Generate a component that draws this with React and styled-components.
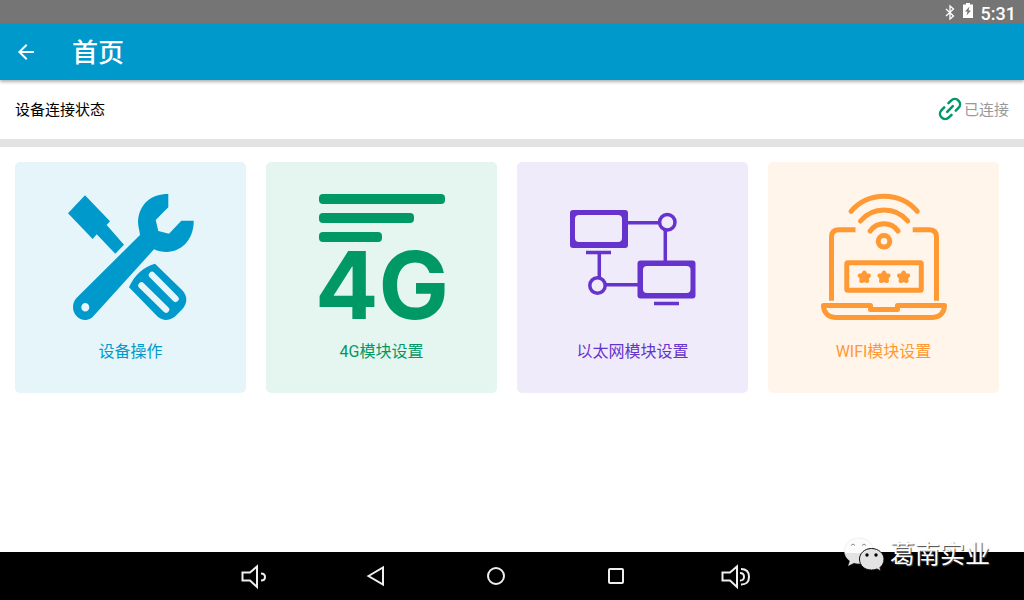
import React from "react";
import styled, { createGlobalStyle } from "styled-components";

const GlobalStyle = createGlobalStyle`
  * {
    box-sizing: border-box;
  }
  body {
    margin: 0;
    background: #fff;
    font-family: Roboto, "Noto Sans CJK SC", sans-serif;
  }
  button {
    font-family: inherit;
    border: none;
    padding: 0;
    cursor: pointer;
  }
`;

const ToolsIcon = () => (
  <CardIcon viewBox="0 0 126 126" fill="currentColor">
    <path d="M0 19.3 17 1.3 42 27.3 38.7 31 56 50.7 47.3 59.7 28.7 40.3 24.7 45Z" />
    <path
      fillRule="evenodd"
      d="M100.3 0V13.3L87.7 26 90.3 37 101 39.7 113.3 26.7H125.7C126 46 113 58 98.7 58 94 58 90 57 86 55.3L26 121.5C23 125 20 126 17.3 126 10.5 126 5 120 5 113.3 5 109.5 6 106.5 8.7 103.7L72 41C71.5 36 70 32 70 27.7 71 10 83 0 100.3 0ZM17.3 109A4 4.3 0 1 0 17.3 117.6 4 4.3 0 1 0 17.3 109Z"
    />
    <path d="M87 69.7 114 96C119.8 102 119.5 109 114.5 115L107 122.5C101 127 95 127 89.5 122.5L61 93.3C66 81 77 72 87 69.7Z" />
    <path
      d="M73.5 91.5 98 115.5M84 81 107.5 104.7"
      stroke="#e5f5fa"
      strokeWidth="6.5"
      strokeLinecap="round"
    />
  </CardIcon>
);

const SignalIcon = () => (
  <CardIcon viewBox="0 0 126 126" fill="currentColor">
    <rect width="126" height="10" rx="4" />
    <rect y="19" width="95" height="10" rx="4" />
    <rect y="38" width="63" height="10" rx="4" />
    <SignalText x="63" y="125" textAnchor="middle">
      4G
    </SignalText>
  </CardIcon>
);

const NetworkIcon = () => (
  <CardIcon viewBox="0 0 126 126" fill="currentColor">
    <path
      fillRule="evenodd"
      d="M3 16H55Q58 16 58 19V51Q58 54 55 54H3Q0 54 0 51V19Q0 16 3 16ZM9 21Q5 21 5 25V44Q5 48 9 48H48Q52 48 52 44V25Q52 21 48 21Z"
    />
    <path
      fillRule="evenodd"
      d="M70.5 66.5H122.5Q125.5 66.5 125.5 69.5V101.5Q125.5 104.5 122.5 104.5H70.5Q67.5 104.5 67.5 101.5V69.5Q67.5 66.5 70.5 66.5ZM77 72Q73 72 73 76V95Q73 99 77 99H116.5Q120.5 99 120.5 95V76Q120.5 72 116.5 72Z"
    />
    <path d="M16 56.7H41V60.3H16ZM84 107.7H109V111.3H84Z" />
    <g fill="none" stroke="currentColor" strokeWidth="3.5">
      <path d="M57 28.7H89.5M95.3 36V67M29.3 60V84M35 90.7H68" />
      <circle cx="97.3" cy="28.3" r="7.7" />
      <circle cx="27.5" cy="91.5" r="7.7" />
    </g>
  </CardIcon>
);

const Star = ({ x }) => (
  <path
    transform={`translate(${x} 83)`}
    fill="currentColor"
    strokeWidth="4"
    strokeLinejoin="round"
    d="M0-4.5 1.6-1.8 4.6-1.4 2.6 1.1 3 4 0 3-3 4-2.6 1.1-4.6-1.4-1.6-1.8Z"
  />
);

const WifiIcon = () => (
  <CardIcon viewBox="0 0 126 126" fill="none" stroke="currentColor" strokeWidth="5">
    <g strokeLinecap="round">
      <path d="M30 17.3A44 44 0 0 1 96.3 17.3" />
      <path d="M39.5 27A31 31 0 0 1 86.7 27" />
      <path d="M49.2 37A17 17 0 0 1 77 37" />
    </g>
    <circle cx="63" cy="47.3" r="5.8" />
    <path d="M10.5 106.7V43Q10.5 35.7 18 35.7H34.5M91.7 35.7H108Q115.5 35.7 115.5 43V106.7" />
    <rect x="25.8" y="68.8" width="74.5" height="27.5" rx="1" />
    <Star x={43.3} />
    <Star x={63} />
    <Star x={82.6} />
    <path
      strokeLinejoin="round"
      d="M2.5 111.5H49.5V115.5H76.5V111.5H123.5C123.5 118 119 123.5 112 123.5H14C7 123.5 2.5 118 2.5 111.5Z"
    />
  </CardIcon>
);

const BackIcon = () => (
  <svg width="24" height="24" viewBox="0 0 24 24" fill="currentColor">
    <path d="M20 11H7.83l5.59-5.59L12 4l-8 8 8 8 1.41-1.41L7.83 13H20v-2z" />
  </svg>
);

const BluetoothIcon = () => (
  <svg width="10" height="16" viewBox="0 0 10 16" fill="none" stroke="currentColor">
    <path d="M1 5 8.5 12 5 15V2L8.5 5 1 12" strokeWidth="1.3" />
  </svg>
);

const BatteryIcon = () => (
  <svg width="10" height="18" viewBox="0 0 10 18" fill="currentColor">
    <path
      fillRule="evenodd"
      d="M3 0H7V1.5H10V15H0V1.5H3ZM6.5 3.5 2 8.5H4.5L3.5 12.5 8 7.5H5.5Z"
    />
  </svg>
);

const LinkIcon = () => (
  <svg
    width="24"
    height="24"
    viewBox="0 0 24 24"
    fill="none"
    stroke="#009966"
    strokeWidth="2.5"
    strokeLinecap="round"
  >
    <g transform="rotate(-45 12 12)">
      <path d="M9 17.2H5.2A5.2 5.2 0 0 1 5.2 6.8H9M15 6.8H18.8A5.2 5.2 0 0 1 18.8 17.2H15M8 12H16" />
    </g>
  </svg>
);

const WechatIcon = () => (
  <svg width="42" height="36" viewBox="0 0 42 36">
    <defs>
      <linearGradient id="bubble" gradientUnits="userSpaceOnUse" x1="0" y1="0" x2="0" y2="32">
        <stop offset="0.5" stopColor="#fcfcfc" />
        <stop offset="0.5" stopColor="#e3e3e3" />
      </linearGradient>
    </defs>
    <path
      fill="url(#bubble)"
      stroke="#e0e0e0"
      strokeWidth="0.5"
      d="M15 1C6 1 0.5 7 0.5 14 0.5 18 2.5 21.5 6 24L4.5 28.5 10 25.8C12 26.5 14 26.8 17 26.5 25 25.5 29.5 20.5 29.5 14 29.5 7 24 1 15 1Z"
    />
    <path
      fill="#e3e3e3"
      stroke="#111"
      strokeWidth="1"
      d="M27.5 11.5C20.5 11.5 15.5 16.5 15.5 22 15.5 28.5 20.5 33 27.5 33 29.5 33 31.5 32.5 33 32L37 34 36 30.5C38.5 28.5 40 25.5 40 22 40 16.5 34.5 11.5 27.5 11.5Z"
    />
    <path d="M7 8.5Q9 5.5 11 8.5M18 8.5Q20 5.5 22 8.5" fill="none" stroke="#888" />
    <circle cx="23" cy="18" r="1.7" />
    <circle cx="32" cy="18" r="1.7" />
  </svg>
);

const navItems = [
  {
    label: "音量减",
    shape: <path d="M2.5 12.5H10L17 6.5V27L10 20.5H2.5ZM21 13.5Q25 13.5 25 17T21 20.5" />,
  },
  { label: "返回", shape: <path d="M8.5 16 23 7.5V24.5Z" /> },
  { label: "主屏幕", shape: <circle cx="16" cy="16" r="8" /> },
  { label: "最近任务", shape: <rect x="9" y="9" width="14" height="14" rx="1" /> },
  {
    label: "音量加",
    shape: (
      <path d="M2.5 12.5H10L17 6.5V27L10 20.5H2.5ZM20 13Q24 13 24 16.8T20 20.5M21 9Q29 9 29 16.8T21 24.5" />
    ),
  },
];

const modules = [
  { title: "设备操作", color: "#0099cc", bg: "#e5f5fa", Icon: ToolsIcon },
  { title: "4G模块设置", color: "#009966", bg: "#e5f5ef", Icon: SignalIcon },
  { title: "以太网模块设置", color: "#6633cc", bg: "#efebfa", Icon: NetworkIcon },
  { title: "WIFI模块设置", color: "#ff9933", bg: "#fff5ea", Icon: WifiIcon },
];

const App = () => {
  return (
    <Page>
      <GlobalStyle />
      <StatusBar>
        <BluetoothIcon />
        <BatteryIcon />
        <Clock>5:31</Clock>
      </StatusBar>
      <Header>
        <BackButton aria-label="返回">
          <BackIcon />
        </BackButton>
        <Title>首页</Title>
      </Header>
      <Connection>
        <span>设备连接状态</span>
        <ConnectionState>
          <LinkIcon />
          已连接
        </ConnectionState>
      </Connection>
      <ModuleGrid>
        {modules.map(({ title, color, bg, Icon }) => (
          <ModuleCard key={title} $color={color} $bg={bg}>
            <Icon />
            <ModuleName>{title}</ModuleName>
          </ModuleCard>
        ))}
      </ModuleGrid>
      <NavBar>
        {navItems.map(({ label, shape }) => (
          <NavButton key={label} aria-label={label}>
            <NavIcon viewBox="0 0 32 32">{shape}</NavIcon>
          </NavButton>
        ))}
      </NavBar>
      <Watermark>
        <WechatIcon />
        葛南实业
      </Watermark>
    </Page>
  );
};

const Page = styled.div`
  position: relative;
  display: flex;
  flex-direction: column;
  min-height: 100vh;
`;

const StatusBar = styled.div`
  display: flex;
  align-items: center;
  justify-content: flex-end;
  gap: 8px;
  height: 24px;
  padding-right: 8px;
  background: #757575;
  color: #fff;
`;

const Clock = styled.span`
  padding-top: 4px;
  font-size: 18px;
  font-weight: 500;
  line-height: 20px;
`;

const Header = styled.header`
  position: relative;
  display: flex;
  align-items: center;
  height: 56px;
  padding-left: 14px;
  background: #0099cc;
  color: #fff;
  box-shadow: 0 2px 3px rgba(0, 0, 0, 0.3);
`;

const BackButton = styled.button`
  display: flex;
  margin-right: 34px;
  background: none;
  color: inherit;
`;

const Title = styled.h1`
  margin: 0;
  padding-top: 2px;
  font-size: 26px;
  font-weight: 500;
  line-height: 54px;
`;

const Connection = styled.div`
  display: flex;
  align-items: center;
  justify-content: space-between;
  height: 67px;
  padding: 0 15px 2px;
  border-bottom: 8px solid #e3e3e3;
  color: #000;
  font-size: 15px;
`;

const ConnectionState = styled.span`
  display: flex;
  align-items: center;
  gap: 2px;
  color: #999;
`;

const ModuleGrid = styled.main`
  display: grid;
  grid-template-columns: repeat(4, 1fr);
  align-content: start;
  gap: 20px;
  flex: 1;
  padding: 15px 25px 15px 15px;
`;

const ModuleCard = styled.button`
  display: flex;
  flex-direction: column;
  align-items: center;
  justify-content: center;
  gap: 20px;
  aspect-ratio: 1;
  border-radius: 5px;
  background: ${(props) => props.$bg};
  color: ${(props) => props.$color};
`;

const CardIcon = styled.svg`
  width: 126px;
  height: 126px;
  overflow: visible;
`;

const SignalText = styled.text`
  font-family: Inter, "Liberation Sans", sans-serif;
  font-size: 94px;
  font-weight: 700;
`;

const ModuleName = styled.span`
  padding-top: 2px;
  font-size: 16px;
  line-height: 20px;
`;

const NavBar = styled.nav`
  display: flex;
  align-items: center;
  justify-content: center;
  height: 48px;
  padding-right: 32px;
  background: #000;
`;

const NavButton = styled.button`
  display: flex;
  align-items: center;
  justify-content: center;
  width: 120px;
  height: 48px;
  background: none;
`;

const NavIcon = styled.svg`
  width: 32px;
  height: 32px;
  fill: none;
  stroke: #eee;
  stroke-width: 2;
`;

const Watermark = styled.div`
  position: absolute;
  right: 34px;
  bottom: 27px;
  display: flex;
  align-items: center;
  gap: 4px;
  color: #fff;
  font-size: 25px;
  line-height: 36px;
  text-shadow: 1px 1px 1px #444;
  pointer-events: none;
`;

export default App;
